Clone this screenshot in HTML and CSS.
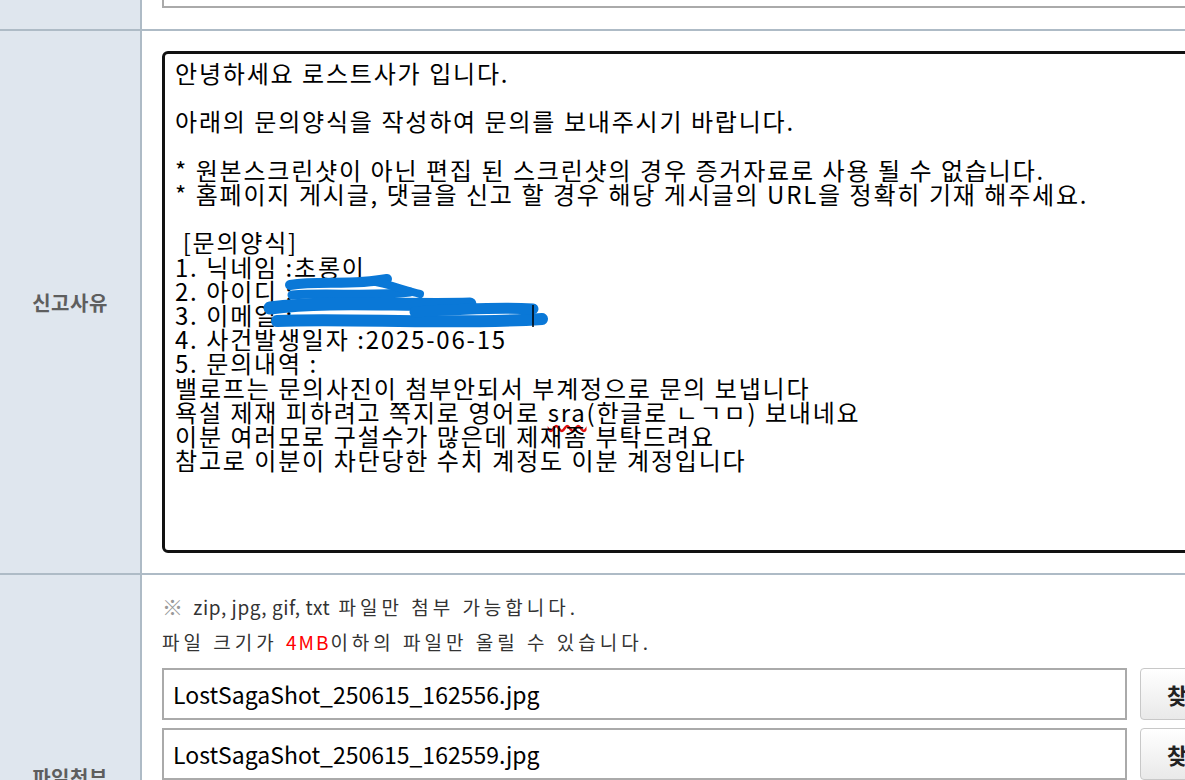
FILE: index.html
```html
<!DOCTYPE html>
<html>
  <head>
    <meta charset="utf-8" />
    <title>신고하기</title>
    <link rel="stylesheet" href="styles.css">
  </head>
  <body>
    <div class="form-table">
      <div class="row row-top">
        <div class="row-label"></div>
        <div class="row-field">
          <div class="text-input"></div>
        </div>
      </div>

      <div class="row">
        <div class="row-label">신고사유</div>
        <div class="row-field">
          <div class="report-box">
<div class="report-text">안녕하세요 로스트사가 입니다.

아래의 문의양식을 작성하여 문의를 보내주시기 바랍니다.

* 원본스크린샷이 아닌 편집 된 스크린샷의 경우 증거자료로 사용 될 수 없습니다.
* 홈페이지 게시글, 댓글을 신고 할 경우 해당 게시글의 URL을 정확히 기재 해주세요.

 [문의양식]
1. 닉네임 :초롱이
2. 아이디 :
3. 이메일 :
4. 사건발생일자 :2025-06-15
5. 문의내역 :
밸로프는 문의사진이 첨부안되서 부계정으로 문의 보냅니다
욕설 제재 피하려고 쪽지로 영어로 <span class="typo">sra</span>(한글로 ㄴㄱㅁ) 보내네요
이분 여러모로 구설수가 많은데 제재좀 부탁드려요
참고로 이분이 차단당한 수치 계정도 이분 계정입니다</div>
            <!-- redaction scribble over id / email -->
            <svg class="scribble" width="420" height="300" viewBox="0 0 420 300">
              <g fill="none" stroke="#0a78d7" stroke-linecap="round" stroke-linejoin="round">
                <path d="M125 231 C155 226 185 232 222 225" stroke-width="10" />
                <path d="M127 241 C165 238 205 243 245 238" stroke-width="9" />
                <path d="M205 227 C222 229 238 236 255 240" stroke-width="8" />
                <path d="M105 254 C165 246 235 252 305 250" stroke-width="13" />
                <path d="M112 267 C185 264 285 271 377 265" stroke-width="12" />
                <path d="M250 258 C295 255 335 253 368 255" stroke-width="11" />
              </g>
              <path d="M368 251 V273" stroke="#000" stroke-width="1.5" />
            </svg>
          </div>
        </div>
      </div>

      <div class="row row-files">
        <div class="row-label">파일첨부</div>
        <div class="row-field">
          <p class="note"><span class="note-mark">※</span> <span class="note-latin">zip, jpg, gif, txt</span> 파일만 첨부 가능합니다.</p>
          <p class="note">파일 크기가 <span class="note-red">4MB</span>이하의 파일만 올릴 수 있습니다.</p>
          <div class="file-list">
            <div class="file-row">
              <div class="file-name">LostSagaShot_250615_162556.jpg</div>
              <button class="file-btn">찾아보기</button>
            </div>
            <div class="file-row">
              <div class="file-name">LostSagaShot_250615_162559.jpg</div>
              <button class="file-btn">찾아보기</button>
            </div>
            <div class="file-row">
              <div class="file-name"></div>
              <button class="file-btn">찾아보기</button>
            </div>
            <div class="file-row">
              <div class="file-name"></div>
              <button class="file-btn">찾아보기</button>
            </div>
            <div class="file-row">
              <div class="file-name"></div>
              <button class="file-btn">찾아보기</button>
            </div>
          </div>
        </div>
      </div>
    </div>
  </body>
</html>
```

FILE: styles.css
```css
* {
  margin: 0;
  padding: 0;
  box-sizing: border-box;
}

body {
  font-family: "Noto Sans CJK KR", "Noto Sans", sans-serif;
  background-color: #ffffff;
  color: #000;
  width: 1185px;
  height: 780px;
  overflow: hidden;
}

/* page is scrolled down a bit */
.form-table {
  margin-top: -56px;
}

.row {
  display: flex;
  border-bottom: 2px solid #aebbc6;
}

.row-label {
  width: 142px;
  flex-shrink: 0;
  background-color: #dfe6ee;
  border-right: 2px solid #aebbc6;
  display: flex;
  align-items: center;
  justify-content: center;
  font-size: 20px;
  letter-spacing: 0.5px;
  font-weight: bold;
  color: #5e5e5e;
}

.row-field {
  flex: 1;
  min-width: 0;
  padding: 20px 0 20px 20px;
}

.row-top .row-field {
  padding-bottom: 21px;
}

.text-input {
  width: 1100px;
  height: 44px;
  border: 2px solid #aaaaaa;
}

.report-box {
  position: relative;
  width: 1100px;
  height: 502px;
  border: 3px solid #111;
  border-radius: 6px;
  padding: 7px 10px;
}

.report-text {
  font-size: 24px;
  line-height: 24.2px;
  letter-spacing: 1.8px;
  word-spacing: 0.5px;
  white-space: pre-wrap;
  color: #000;
}

.typo {
  text-decoration: underline wavy #e01010;
  text-decoration-skip-ink: none;
  text-underline-offset: 3px;
}

.scribble {
  position: absolute;
  left: 0;
  top: 0;
  pointer-events: none;
}

.row-files .row-field {
  padding-top: 14px;
}

.note {
  font-size: 19px;
  line-height: 35px;
  letter-spacing: 4px;
  color: #333;
  white-space: nowrap;
}

.note-mark {
  font-size: 21px;
  color: #999;
  letter-spacing: 0;
  margin-right: 2px;
}

.note-latin {
  letter-spacing: 0.6px;
}

.note-red {
  color: #ff0000;
  letter-spacing: 2px;
}

.file-list {
  margin-top: 9px;
  display: flex;
  flex-direction: column;
  gap: 8px;
}

.file-row {
  display: flex;
  gap: 13px;
}

.file-name {
  width: 965px;
  height: 52px;
  flex-shrink: 0;
  border: 2px solid #aaaaaa;
  padding: 0 9px;
  font-size: 23px;
  line-height: 48px;
}

.file-btn {
  width: 130px;
  height: 52px;
  flex-shrink: 0;
  border: 1px solid #c8c8c8;
  border-radius: 4px;
  background: linear-gradient(#ffffff, #e9e9e9);
  font-family: "Noto Sans CJK KR", sans-serif;
  font-size: 22px;
  font-weight: bold;
  color: #222;
  text-align: left;
  white-space: nowrap;
  padding-left: 26px;
}
```
